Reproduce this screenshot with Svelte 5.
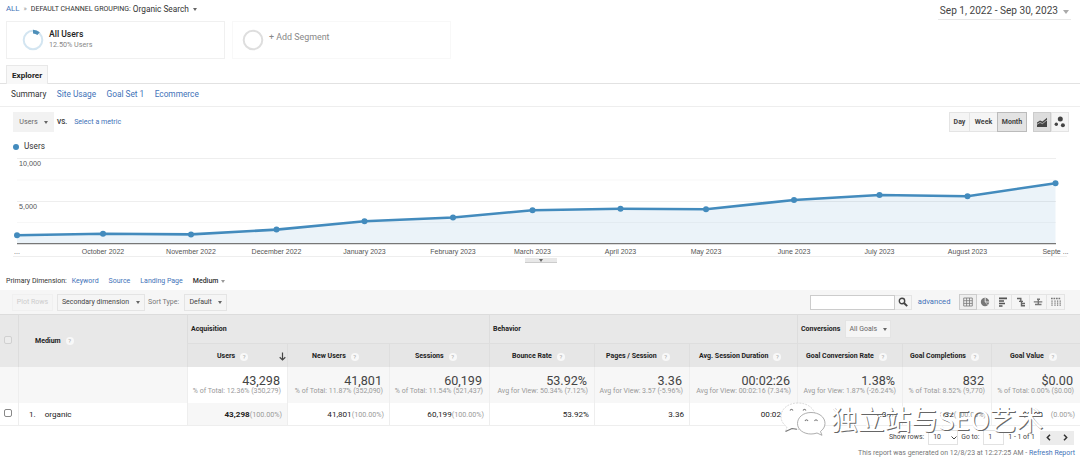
<script lang="ts">
	const tabs = ['Summary', 'Site Usage', 'Goal Set 1', 'Ecommerce'];
	const dimensions = ['Keyword', 'Source', 'Landing Page'];

	const points = [
		{ x: 17, y: 80.3, label: '...' },
		{ x: 103, y: 78.7, label: 'October 2022' },
		{ x: 191, y: 79.4, label: 'November 2022' },
		{ x: 276.5, y: 74.6, label: 'December 2022' },
		{ x: 364.5, y: 66.2, label: 'January 2023' },
		{ x: 453, y: 62.5, label: 'February 2023' },
		{ x: 532.5, y: 55.2, label: 'March 2023' },
		{ x: 620.5, y: 53.8, label: 'April 2023' },
		{ x: 706, y: 54.2, label: 'May 2023' },
		{ x: 794, y: 45, label: 'June 2023' },
		{ x: 879.5, y: 40, label: 'July 2023' },
		{ x: 967.5, y: 41.2, label: 'August 2023' },
		{ x: 1055.5, y: 28.2, label: 'Septe ...' }
	];
	const line = points.map((p) => `${p.x},${p.y}`).join(' ');
	const area = `17,89 ${line} 1055.5,89`;

	const columns = [
		{ name: 'Users', total: '43,298', note: '% of Total: 12.36% (350,279)', value: '43,298', pct: '(100.00%)', pad: 29, sorted: true },
		{ name: 'New Users', total: '41,801', note: '% of Total: 11.87% (352,090)', value: '41,801', pct: '(100.00%)', pad: 24 },
		{ name: 'Sessions', total: '60,199', note: '% of Total: 11.54% (521,437)', value: '60,199', pct: '(100.00%)', pad: 25 },
		{ name: 'Bounce Rate', total: '53.92%', note: 'Avg for View: 50.34% (7.12%)', value: '53.92%', pct: '', pad: 22 },
		{ name: 'Pages / Session', total: '3.36', note: 'Avg for View: 3.57 (-5.96%)', value: '3.36', pct: '', pad: 11 },
		{ name: 'Avg. Session Duration', total: '00:02:26', note: 'Avg for View: 00:02:16 (7.34%)', value: '00:02:26', pct: '', pad: 9 },
		{ name: 'Goal Conversion Rate', total: '1.38%', note: 'Avg for View: 1.87% (-26.24%)', value: '1.38%', pct: '', pad: 8 },
		{ name: 'Goal Completions', total: '832', note: '% of Total: 8.52% (9,770)', value: '832', pct: '(100.00%)', pad: 7 },
		{ name: 'Goal Value', total: '$0.00', note: '% of Total: 0.00% ($0.00)', value: '$0.00', pct: '(0.00%)', pad: 18 }
	];
	const widths = [18, 169, 100, 102, 100, 105, 95, 108, 105, 89, 89];
</script>

<div class="report">
	<header class="top">
		<div class="crumbs">
			<a href="#all">ALL</a><span class="sep">»</span><span class="grouping">DEFAULT CHANNEL GROUPING:</span>
			<span class="current">Organic Search</span><i class="caret"></i>
		</div>
		<div class="date">Sep 1, 2022 - Sep 30, 2023<i class="caret"></i></div>
	</header>

	<div class="segments">
		<div class="segment">
			<svg width="22" height="22" viewBox="0 0 22 22">
				<circle cx="11" cy="11" r="9.3" fill="none" stroke="#d3e5f1" stroke-width="2" />
				<path d="M11 2.6A8.4 8.4 0 0 1 16.6 4.7" fill="none" stroke="#4e8fb9" stroke-width="3.6" />
			</svg>
			<div>
				<div class="seg-name">All Users</div>
				<div class="seg-sub">12.50% Users</div>
			</div>
		</div>
		<div class="segment empty">
			<svg width="22" height="22" viewBox="0 0 22 22">
				<circle cx="11" cy="11" r="9.3" fill="none" stroke="#dedede" stroke-width="2" />
			</svg>
			<div class="seg-add">+ Add Segment</div>
		</div>
	</div>

	<div class="explorer"><span>Explorer</span></div>
	<nav class="tabs">
		{#each tabs as tab, i}
			<a href="#tab" class:active={i === 0}>{tab}</a>
		{/each}
	</nav>

	<div class="metric-bar">
		<button class="drop users">Users<i class="caret"></i></button>
		<b>VS.</b>
		<a href="#metric">Select a metric</a>
		<div class="periods">
			<button>Day</button><button>Week</button><button class="on">Month</button>
		</div>
		<div class="chart-types">
			<button class="on" aria-label="Line chart">
				<svg width="12" height="12" viewBox="0 0 12 12">
					<path d="M1 6.5 4 4.5 6.5 5.5 11 1.8V11H1Z" fill="#444" />
					<path d="M1 8.3 4 6.5 6.5 7.6 11 4" fill="none" stroke="#ddd" stroke-width=".7" />
				</svg>
			</button>
			<button aria-label="Motion chart">
				<svg width="12" height="12" viewBox="0 0 12 12" fill="#444">
					<circle cx="6.3" cy="2.9" r="2.5" /><circle cx="2.3" cy="8.3" r="1.7" /><circle cx="8.9" cy="9.2" r="2" />
				</svg>
			</button>
		</div>
	</div>

	<div class="legend"><i></i>Users</div>
	<svg class="chart" width="1080" height="103" viewBox="0 0 1080 103">
		{#each [3.5, 25, 46.5, 67.5] as y, i}
			<line x1="17" x2="1056" y1={y} y2={y} stroke={i % 2 ? '#f7f7f7' : '#eee'} />
		{/each}
		<polygon points={area} fill="#3c8cc8" fill-opacity="0.1" />
		<line x1="17" x2="1056" y1="88.7" y2="88.7" stroke="#777" stroke-width="1.2" />
		<polyline points={line} fill="none" stroke="#438bbd" stroke-width="2.6" />
		{#each points as p}
			<circle cx={p.x} cy={p.y} r="3" fill="#438bbd" />
			<text x={p.x} y="98.5" text-anchor="middle">{p.label}</text>
		{/each}
		<text x="19" y="11" class="scale">10,000</text>
		<text x="19" y="54" class="scale">5,000</text>
		<line x1="13" x2="1067" y1="101.5" y2="101.5" stroke="#eee" />
	</svg>
	<div class="handle"><i class="caret"></i></div>

	<div class="dimensions">
		<span>Primary Dimension:</span>
		{#each dimensions as dim}
			<a href="#dim">{dim}</a>
		{/each}
		<b>Medium</b><i class="caret"></i>
	</div>

	<div class="toolbar">
		<button class="drop plot">Plot Rows</button>
		<button class="drop secondary">Secondary dimension<i class="caret"></i></button>
		<span class="sort">Sort Type:</span>
		<button class="drop default">Default<i class="caret"></i></button>
		<div class="search">
			<input aria-label="Search" />
			<button aria-label="Go">
				<svg width="10" height="10" viewBox="0 0 10 10" fill="none" stroke="#444">
					<circle cx="4" cy="4" r="2.7" stroke-width="1.4" /><path d="M6 6 9.2 9.2" stroke-width="1.9" />
				</svg>
			</button>
		</div>
		<a href="#advanced">advanced</a>
		<div class="views">
			<button class="on" aria-label="Table">
				<svg width="10" height="10" viewBox="0 0 10 10" fill="none" stroke="#777" stroke-width=".8"><path d="M.7 1H9.3V9H.7ZM.7 3.7H9.3M.7 6.4H9.3M3.6 1V9M6.5 1V9" /></svg>
			</button>
			<button aria-label="Percentage">
				<svg width="10" height="10" viewBox="0 0 10 10"><circle cx="5" cy="5" r="4.2" fill="#777" /><path d="M5.2 5V1M5.2 5H9" stroke="#f5f5f5" stroke-width=".9" /><path d="M5.2 5 7.6 8" stroke="#ccc" stroke-width=".7" /></svg>
			</button>
			<button aria-label="Performance">
				<svg width="10" height="10" viewBox="0 0 10 10" stroke="#555" stroke-width="1.6"><path d="M1 1.4H9M1 4H6M1 6.5H7M1 9H4.5" /></svg>
			</button>
			<button aria-label="Comparison">
				<svg width="10" height="10" viewBox="0 0 10 10" fill="none" stroke="#666" stroke-width="1.4"><path d="M1 1.5H5.5M4.8 1.5V4.4M3 4.4H7M5 6.5H9M5.5 4.4V8.8H9" /></svg>
			</button>
			<button aria-label="Term cloud">
				<svg width="10" height="10" viewBox="0 0 10 10" fill="none" stroke="#777" stroke-width="1.4"><path d="M4 2.3H7M.8 4.9H9.3M2 7.5H8.5M5.3 2V8" /></svg>
			</button>
			<button aria-label="Pivot">
				<svg width="10" height="10" viewBox="0 0 10 10" fill="none" stroke="#777" stroke-width="1.3"><path d="M0 1.5H10" stroke-dasharray="1.7 .8" /><path d="M1 3.5V9M4 3.5V9M6.6 3.5V9M9.2 3.5V9" stroke-dasharray="1.2 .8" /></svg>
			</button>
		</div>
	</div>

	<table>
		<colgroup>
			{#each widths as w}
				<col style="width: {w}px" />
			{/each}
		</colgroup>
		<thead>
			<tr class="groups">
				<th rowspan="2"><span class="check off"></span></th>
				<th rowspan="2" class="medium">Medium<i class="help">?</i></th>
				<th colspan="3" class="group">Acquisition</th>
				<th colspan="3" class="group">Behavior</th>
				<th colspan="3" class="group conv">
					<div>Conversions <button class="drop goals">All Goals<i class="caret"></i></button></div>
				</th>
			</tr>
			<tr class="names">
				{#each columns as col}
					<th>
						<div style="padding-left: {col.pad}px">
							{col.name}<i class="help">?</i>
							{#if col.sorted}
								<svg width="7" height="9" viewBox="0 0 7 9" fill="none" stroke="#444" stroke-width="1.2"><path d="M3.5 .5V8M.7 5.3 3.5 8 6.3 5.3" /></svg>
							{/if}
						</div>
					</th>
				{/each}
			</tr>
		</thead>
		<tbody>
			<tr class="totals">
				<td></td>
				<td></td>
				{#each columns as col}
					<td class:sorted={col.sorted}>
						<div class="total">{col.total}</div>
						<div class="note">{col.note}</div>
					</td>
				{/each}
			</tr>
			<tr class="row">
				<td><span class="check"></span></td>
				<td class="name"><span>1.</span>organic</td>
				{#each columns as col}
					<td class:sorted={col.sorted}>{col.value}<small>{col.pct}</small></td>
				{/each}
			</tr>
		</tbody>
	</table>

	<div class="pager">
		<span>Show rows:</span>
		<div class="select">10<svg width="6" height="4" viewBox="0 0 6 4" fill="none" stroke="#444"><path d="M.5 .5 3 3 5.5 .5" /></svg></div>
		<span>Go to:</span>
		<div class="page">1</div>
		<span>1 - 1 of 1</span>
		<div class="arrows">
			<svg width="5" height="7" viewBox="0 0 5 7"><path d="M4 .7 1.3 3.5 4 6.3" /></svg>
			<svg width="5" height="7" viewBox="0 0 5 7"><path d="M1 .7 3.7 3.5 1 6.3" /></svg>
		</div>
	</div>
	<footer>This report was generated on 12/8/23 at 12:27:25 AM - <a href="#refresh">Refresh Report</a></footer>

	<div class="watermark">
		<svg width="46" height="34" viewBox="0 0 46 34">
			<path d="M18 1C8 1 1 7 1 14.500C1 19 3.500 22.500 7 25L5.500 29.500 12 26.500C14 27.200 17 27.500 19 27.500C29 27.500 35 21 35 14C35 7 28 1 18 1Z" fill="#fff" stroke="#ccc" stroke-width=".7" stroke-dasharray="2 1" />
			<path d="M5.500 29.500 12 26.500 17 27.300M10 8.500Q11.500 6 13 8.500M23 8.500Q24.500 6 26 8.500" fill="none" stroke="#777" stroke-width="1.1" />
			<path d="M31 10.500C23 10.500 17.500 15.500 17.500 21.500C17.500 28 24 32 31 32C33 32 35 31.700 37 31L42 33.300 40.500 29.500C43 27.500 45 25 45 21.500C45 15 39 10.500 31 10.500Z" fill="#fff" stroke="#999" stroke-width=".8" />
			<path d="M25 19Q26.500 16.500 28 19M34.500 19Q36 16.500 37.500 19" fill="none" stroke="#777" stroke-width="1.1" />
		</svg>
		<span>独立站与SEO艺术</span>
	</div>
</div>

<style>
	:global(body) {
		margin: 0;
		background: #fff;
	}

	.report {
		position: relative;
		width: 1080px;
		height: 459px;
		overflow: hidden;
		font: 7.2px/1 Roboto, sans-serif;
		color: #444;
	}

	.report * {
		box-sizing: border-box;
	}

	a {
		color: #4272b8;
		text-decoration: none;
	}

	button {
		font: inherit;
		color: inherit;
		padding: 0;
		margin: 0;
		border: 1px solid #e4e4e4;
		background: #f5f5f5;
		display: flex;
		align-items: center;
		justify-content: center;
	}

	.caret {
		display: inline-block;
		border: 2.5px solid transparent;
		border-top: 3.5px solid #666;
		border-bottom: 0;
	}

	.top {
		display: flex;
		justify-content: space-between;
		height: 21px;
		padding: 0 9px 0 6px;
	}

	.crumbs {
		display: flex;
		align-items: center;
		height: 18px;
		font-size: 8px;
		color: #333;
	}

	.crumbs a {
		font-size: 7.8px;
	}

	.sep {
		margin: 0 4px;
		color: #999;
		font-size: 7px;
	}

	.grouping {
		font-size: 7.05px;
		margin-right: 2px;
	}

	.current {
		font-size: 8.3px;
		margin-right: 4px;
	}

	.date {
		display: flex;
		align-items: center;
		gap: 5px;
		height: 20px;
		padding: 4px 2px 0;
		border-bottom: 1px solid #e8e8e8;
		font-size: 10.1px;
	}

	.date .caret {
		border-top-color: #aaa;
		border-width: 4px 3px 0;
	}

	.segments {
		display: flex;
		gap: 7px;
		padding-left: 6px;
	}

	.segment {
		display: flex;
		gap: 5px;
		width: 219px;
		height: 38px;
		padding: 7px 0 0 15px;
		border: 1px solid #f0f0f0;
	}

	.segment.empty {
		padding-left: 9px;
		border-color: #f8f8f8;
	}

	.seg-name {
		font-size: 8.6px;
		font-weight: 500;
		color: #222;
		margin: 1px 0 2px;
	}

	.seg-sub {
		color: #888;
	}

	.seg-add {
		font-size: 8.9px;
		color: #888;
		margin-top: 4px;
	}

	.explorer {
		display: flex;
		height: 25px;
		padding: 6px 0 0 6px;
		border-bottom: 1px solid #e2e2e2;
	}

	.explorer span {
		width: 42px;
		height: 19px;
		padding: 5px 0 0 5px;
		border: 1px solid #e8e8e8;
		border-bottom: 0;
		background: #f8f8f8;
		font-size: 8.1px;
		font-weight: 700;
		color: #222;
	}

	.tabs {
		display: flex;
		align-items: center;
		gap: 10.4px;
		height: 23px;
		padding: 0 0 2px 11px;
		border-bottom: 1px solid #eee;
		font-size: 8.3px;
	}

	.tabs .active {
		color: #333;
	}

	.metric-bar {
		display: flex;
		align-items: center;
		height: 30px;
		padding: 0 11px 0 13px;
	}

	.metric-bar b {
		font-size: 6.5px;
		margin: 0 7px 0 3px;
	}

	.metric-bar a {
		font-size: 7.1px;
	}

	.users {
		width: 41px;
		height: 20px;
		gap: 6px;
		border-color: #f2f2f2;
		background: #f2f2f2;
		color: #666;
	}

	.periods,
	.chart-types {
		display: flex;
		height: 20px;
	}

	.periods {
		margin: 0 6px 0 auto;
		font-size: 7px;
		font-weight: 700;
	}

	.periods button {
		width: 21px;
	}

	.periods button:nth-child(2) {
		width: 27px;
		border-width: 1px 0;
	}

	.periods .on {
		width: 30px;
		background: #e3e3e3;
		border-color: #bbb;
	}

	.chart-types button {
		width: 18px;
	}

	.chart-types .on {
		background: #ddd;
		border-color: #ccc;
	}

	.legend {
		display: flex;
		align-items: center;
		gap: 5px;
		height: 18px;
		padding: 1px 0 0 13px;
		font-size: 8.2px;
		color: #333;
	}

	.legend i {
		width: 6px;
		height: 6px;
		border-radius: 50%;
		background: #438bbd;
	}

	.chart {
		display: block;
	}

	.chart text {
		font: 7px 'Liberation Sans', sans-serif;
		fill: #555;
	}

	.chart .scale {
		font-size: 7.2px;
	}

	.handle {
		display: flex;
		align-items: center;
		justify-content: center;
		width: 32px;
		height: 5px;
		margin-left: 525px;
		background: #e8e8e8;
		border-bottom: 1px solid #ccc;
	}

	.handle .caret {
		border-width: 3px 2px 0;
	}

	.dimensions {
		display: flex;
		align-items: center;
		height: 27px;
		padding: 9px 0 0 6px;
		font-size: 7px;
		color: #333;
	}

	.dimensions span {
		margin-right: 5px;
	}

	.dimensions a {
		margin-right: 10px;
	}

	.dimensions b {
		font-weight: 500;
		margin-right: 3px;
	}

	.dimensions .caret {
		border-width: 3px 2px 0;
		border-top-color: #999;
	}

	.toolbar {
		display: flex;
		align-items: center;
		height: 24px;
		padding: 0 15px 0 12px;
		background: #f6f6f6;
		font-size: 7px;
	}

	.toolbar .drop {
		height: 17px;
	}

	.toolbar .plot {
		width: 41px;
		margin-right: 4px;
		color: #ccc;
		border-color: #f0f0f0;
	}

	.secondary {
		width: 88px;
		gap: 7px;
	}

	.sort {
		margin: 0 5px 0 3px;
		color: #777;
	}

	.default {
		width: 43px;
		gap: 6px;
	}

	.search {
		display: flex;
		height: 15px;
		margin: 0 6px 0 auto;
	}

	.search input {
		width: 85px;
		padding: 0;
		border: 1px solid #ccc;
		background: #fff;
	}

	.search button {
		width: 17px;
		border-left: 0;
	}

	.toolbar a {
		font-size: 7.6px;
	}

	.views {
		display: flex;
		margin-left: 9px;
	}

	.views button {
		width: 17.6px;
		height: 16px;
		border-left-width: 0;
	}

	.views .on {
		border: 1px solid #ccc;
		background: #eee;
	}

	table {
		width: 1080px;
		table-layout: fixed;
		border-collapse: separate;
		border-spacing: 0;
	}

	th,
	td {
		padding: 0;
		border-left: 1px solid #ddd;
		vertical-align: middle;
	}

	th:first-child,
	td:first-child {
		border-left: 0;
	}

	thead {
		background: #e8e8e8;
		font-size: 7px;
		color: #222;
	}

	th {
		border-top: 1px solid #dcdcdc;
		text-align: left;
		font-weight: 700;
	}

	.groups {
		height: 29px;
	}

	.names {
		height: 24px;
	}

	.names th {
		padding-top: 2px;
		border-color: #dedede;
		background: #e6e6e6;
	}

	.names th:first-child {
		border-left: 1px solid #dedede;
	}

	.medium {
		padding-left: 16px;
	}

	.group {
		padding-left: 3px;
	}

	.conv div,
	.names th div {
		display: flex;
		align-items: center;
	}

	.goals {
		width: 46px;
		height: 18px;
		gap: 6px;
		margin-left: 5px;
		font-weight: 400;
		font-size: 7px;
		color: #666;
	}

	.help {
		display: inline-flex;
		align-items: center;
		justify-content: center;
		width: 8px;
		height: 8px;
		margin-left: 5px;
		border-radius: 50%;
		background: #f8f8f8;
		font-size: 6px;
		font-style: normal;
		font-weight: 400;
		color: #aaa;
	}

	.names svg {
		margin: 0 1px 0 auto;
	}

	.check {
		display: block;
		width: 8px;
		height: 8px;
		margin: -2px 0 0 4px;
		border: 1px solid #888;
		border-radius: 2px;
		background: #fff;
	}

	.check.off {
		border-color: #d0d0d0;
		background: #ececec;
	}

	.totals {
		height: 36px;
		background: #f7f7f7;
	}

	.totals td,
	.row td {
		border-color: #eee;
		text-align: right;
		white-space: nowrap;
	}

	.totals .sorted {
		background: #fff;
	}

	.total {
		font-size: 12.6px;
		padding: 0 7px 1px 0;
	}

	.note {
		font-size: 7px;
		color: #999;
		padding-right: 6px;
	}

	.row {
		height: 23px;
		font-size: 8.1px;
		color: #222;
	}

	.row td {
		padding-right: 5px;
		border-bottom: 1px solid #eee;
	}

	.row .sorted {
		background: #f7f7f7;
		font-weight: 700;
	}

	.row .name {
		padding-left: 10px;
		text-align: left;
	}

	.name span {
		margin-right: 9px;
	}

	small {
		font-size: 7.2px;
		font-weight: 400;
		color: #999;
	}

	.row td:last-child small {
		margin-left: 8px;
	}

	.pager {
		display: flex;
		align-items: center;
		justify-content: flex-end;
		height: 23px;
		padding-right: 6px;
		font-size: 6.9px;
	}

	.select,
	.page {
		display: flex;
		align-items: center;
		height: 15px;
		border: 1px solid #e2e2e2;
		background: #fff;
	}

	.select {
		width: 30px;
		gap: 10px;
		padding-left: 4px;
		margin: 0 3px 0 4px;
	}

	.page {
		width: 21px;
		padding-left: 4px;
		margin: 0 4px 0 4px;
	}

	.arrows {
		display: flex;
		align-items: center;
		justify-content: space-around;
		width: 34px;
		height: 14px;
		margin-left: 5px;
		background: #ececec;
		fill: none;
		stroke: #333;
		stroke-width: 1.5;
	}

	footer {
		padding: 1px 5px 0 0;
		text-align: right;
		font-size: 6.95px;
		color: #777;
	}

	.watermark {
		position: absolute;
		left: 780px;
		top: 402px;
		display: flex;
		align-items: center;
		height: 34px;
		white-space: nowrap;
	}

	.watermark span {
		margin-left: 5px;
		font: 400 26.8px/34px 'Noto Sans CJK SC', sans-serif;
		color: #fff;
		text-shadow: 1px 1px 0 #666;
	}
</style>
